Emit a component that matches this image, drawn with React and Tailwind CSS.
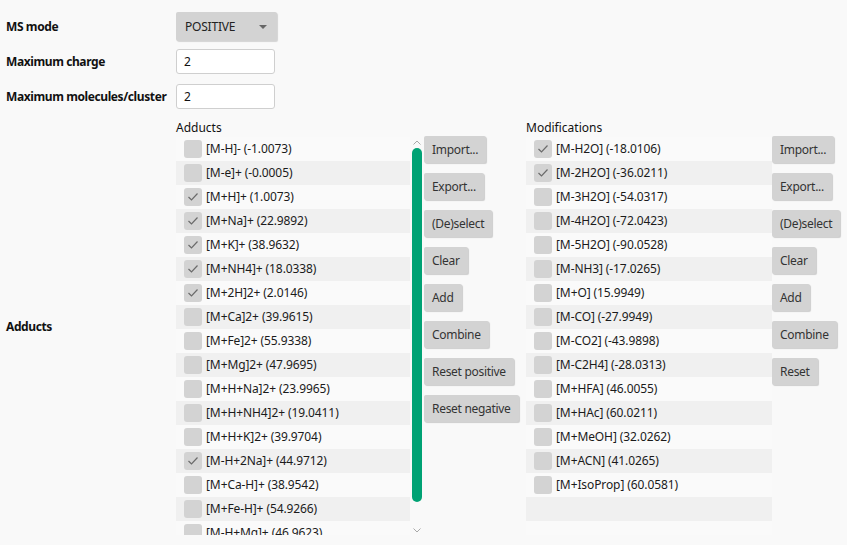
import React from "react";

const adducts = [
  ["[M-H]- (-1.0073)", false],
  ["[M-e]+ (-0.0005)", false],
  ["[M+H]+ (1.0073)", true],
  ["[M+Na]+ (22.9892)", true],
  ["[M+K]+ (38.9632)", true],
  ["[M+NH4]+ (18.0338)", true],
  ["[M+2H]2+ (2.0146)", true],
  ["[M+Ca]2+ (39.9615)", false],
  ["[M+Fe]2+ (55.9338)", false],
  ["[M+Mg]2+ (47.9695)", false],
  ["[M+H+Na]2+ (23.9965)", false],
  ["[M+H+NH4]2+ (19.0411)", false],
  ["[M+H+K]2+ (39.9704)", false],
  ["[M-H+2Na]+ (44.9712)", true],
  ["[M+Ca-H]+ (38.9542)", false],
  ["[M+Fe-H]+ (54.9266)", false],
  ["[M-H+Mg]+ (46.9623)", false],
];

const modifications = [
  ["[M-H2O] (-18.0106)", true],
  ["[M-2H2O] (-36.0211)", true],
  ["[M-3H2O] (-54.0317)", false],
  ["[M-4H2O] (-72.0423)", false],
  ["[M-5H2O] (-90.0528)", false],
  ["[M-NH3] (-17.0265)", false],
  ["[M+O] (15.9949)", false],
  ["[M-CO] (-27.9949)", false],
  ["[M-CO2] (-43.9898)", false],
  ["[M-C2H4] (-28.0313)", false],
  ["[M+HFA] (46.0055)", false],
  ["[M+HAc] (60.0211)", false],
  ["[M+MeOH] (32.0262)", false],
  ["[M+ACN] (41.0265)", false],
  ["[M+IsoProp] (60.0581)", false],
];

function Check({ on }) {
  return (
    <div className="w-[18px] h-[18px] rounded-[3px] bg-[#d3d3d3] flex items-center justify-center shrink-0">
      {on && (
        <svg width="12" height="10" viewBox="0 0 12 10">
          <polyline points="1.5,5 4.5,8 10.5,1.5" fill="none" stroke="#6a6a6a" strokeWidth="1.2" />
        </svg>
      )}
    </div>
  );
}

function Row({ label, on, idx }) {
  return (
    <div
      className={`h-[24px] flex items-center gap-[4px] pl-[8px] shrink-0 ${
        idx % 2 === 1 ? "bg-[#f0f0f0]" : "bg-[#fafafa]"
      }`}
    >
      <Check on={on} />
      <span className="whitespace-nowrap text-[#1b1b1b] tracking-[-0.1px]">{label}</span>
    </div>
  );
}

function Btn({ children }) {
  return (
    <button className="h-[27px] px-[8px] self-start rounded-[2px] bg-[#d3d3d3] text-[#333] tracking-[-0.3px] shadow-[1px_1px_1px_rgba(0,0,0,0.18)] whitespace-nowrap text-left">
      {children}
    </button>
  );
}

function Scrollbar() {
  return (
    <div className="w-[13px] h-full flex flex-col items-center">
      <svg width="8" height="5" viewBox="0 0 8 5" className="mt-[3px]">
        <polyline points="0.5,4.5 4,1 7.5,4.5" fill="none" stroke="#a8a8a8" strokeWidth="1" />
      </svg>
      <div className="w-[10px] h-[354px] mt-[3px] rounded-full bg-[#00a274]" />
      <div className="flex-1" />
      <svg width="8" height="5" viewBox="0 0 8 5" className="mb-[2px]">
        <polyline points="0.5,0.5 4,4 7.5,0.5" fill="none" stroke="#a8a8a8" strokeWidth="1" />
      </svg>
    </div>
  );
}

export default function App() {
  return (
    <div
      className="w-[847px] h-[545px] bg-[#f9f9f9] overflow-hidden text-[12px] text-[#111] pt-[12px]"
      style={{ fontFamily: '"Noto Sans", "Open Sans", sans-serif' }}
    >
      <div className="flex items-center h-[29px]">
        <div className="w-[176px] pl-[6px] font-bold tracking-[-0.4px]">MS mode</div>
        <div className="w-[101px] h-[29px] bg-[#d3d3d3] rounded-[2px] shadow-[1px_1px_1px_rgba(0,0,0,0.15)] flex items-center justify-between pl-[9px] pr-[10px] text-[#222] tracking-[-0.2px]">
          <span>POSITIVE</span>
          <svg width="8" height="4" viewBox="0 0 8 4">
            <polygon points="0,0 8,0 4,4" fill="#666" />
          </svg>
        </div>
      </div>
      <div className="flex items-center h-[25px] mt-[8px]">
        <div className="w-[176px] pl-[6px] font-bold tracking-[-0.4px]">Maximum charge</div>
        <div className="w-[99px] h-[25px] bg-white border border-[#cfcfcf] rounded-[3px] flex items-center pl-[7px]">2</div>
      </div>
      <div className="flex items-center h-[25px] mt-[10px]">
        <div className="w-[176px] pl-[6px] font-bold whitespace-nowrap tracking-[-0.4px]">Maximum molecules/cluster</div>
        <div className="w-[99px] h-[25px] bg-white border border-[#cfcfcf] rounded-[3px] flex items-center pl-[7px]">2</div>
      </div>

      <div className="flex h-[418px] mt-[9px]">
        <div className="w-[176px] pl-[6px] font-bold flex items-center tracking-[-0.4px]">Adducts</div>

        <div className="flex flex-col">
          <div className="h-[19px] flex items-center">Adducts</div>
          <div className="flex h-[398px]">
            <div className="w-[234px] h-full overflow-hidden flex flex-col">
              {adducts.map(([l, on], i) => (
                <Row key={l} label={l} on={on} idx={i} />
              ))}
            </div>
            <Scrollbar />
            <div className="w-[96px] ml-[1px] flex flex-col gap-[10px] -mt-[1px]">
              <Btn>Import...</Btn>
              <Btn>Export...</Btn>
              <Btn>(De)select</Btn>
              <Btn>Clear</Btn>
              <Btn>Add</Btn>
              <Btn>Combine</Btn>
              <Btn>Reset positive</Btn>
              <Btn>Reset negative</Btn>
            </div>
          </div>
        </div>

        <div className="flex flex-col ml-[6px]">
          <div className="h-[19px] flex items-center">Modifications</div>
          <div className="flex h-[398px]">
            <div className="w-[246px] h-full overflow-hidden flex flex-col bg-[#fafafa]">
              {modifications.map(([l, on], i) => (
                <Row key={l} label={l} on={on} idx={i} />
              ))}
              <div className="h-[24px] bg-[#f0f0f0] shrink-0" />
            </div>
            <div className="flex flex-col gap-[10px] -mt-[1px]">
              <Btn>Import...</Btn>
              <Btn>Export...</Btn>
              <Btn>(De)select</Btn>
              <Btn>Clear</Btn>
              <Btn>Add</Btn>
              <Btn>Combine</Btn>
              <Btn>Reset</Btn>
            </div>
          </div>
        </div>
      </div>
    </div>
  );
}
